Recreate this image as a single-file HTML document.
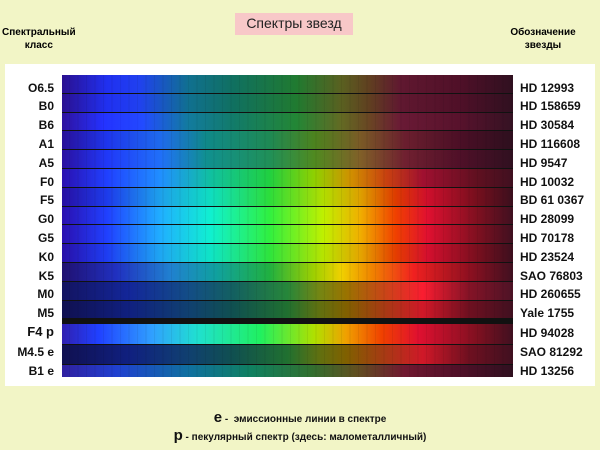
<!DOCTYPE html><html><head><meta charset="utf-8"><style>
body{margin:0;width:600px;height:450px;background:#f2f5c6;font-family:"Liberation Sans",sans-serif;position:relative;overflow:hidden}
.a{position:absolute}
.box{left:5px;top:64px;width:590px;height:322px;background:#fff}
.sp{left:62px;top:75px;width:451px;height:302px;background:#111;}
.r{position:absolute;left:0;width:451px;height:17.8px}
.r::after{content:"";position:absolute;inset:0;background:repeating-linear-gradient(90deg,rgba(0,0,0,0) 0 7px,rgba(0,0,0,.06) 7px 8px,rgba(0,0,0,0) 8px 15px,rgba(0,0,0,.04) 15px 17px);}
.L{left:0;width:54px;text-align:right;font-weight:bold;font-size:12px;color:#111}
.R{left:520px;font-weight:bold;font-size:12px;color:#111}
.hot{background:linear-gradient(90deg,#2a1090 0%,#2030f0 10%,#2040f0 17%,#107090 28%,#107060 38%,#207a30 52%,#5a6020 62%,#604020 68%,#601830 75%,#501028 88%,#301020 100%)}
.A{background:linear-gradient(90deg,#2a10a0 0%,#2038f8 10%,#2070f8 22%,#109090 32%,#209058 46%,#508a20 56%,#806028 66%,#702030 76%,#501028 88%,#301020 100%)}
.F{background:linear-gradient(90deg,#2a10b0 0%,#2040ff 10%,#2090ff 22%,#10c0a0 33%,#20d040 46%,#90d000 56%,#d09000 64%,#c84010 72%,#a01030 80%,#601020 92%,#401020 100%)}
.G{background:linear-gradient(90deg,#2a10b0 0%,#2040ff 10%,#20b0ff 22%,#10f0d0 33%,#30f040 46%,#c0f000 58%,#f0b000 66%,#f04000 74%,#e01030 81%,#801020 92%,#401020 100%)}
.K{background:linear-gradient(90deg,#201070 0%,#2030c0 12%,#2080d0 24%,#10a0a0 34%,#20b040 46%,#a0d000 56%,#f0d000 62%,#f08000 69%,#f02020 78%,#901020 90%,#401020 100%)}
.M{background:linear-gradient(90deg,#101050 0%,#102080 15%,#104070 28%,#105050 38%,#207030 50%,#607010 57%,#806000 63%,#a04010 70%,#d01828 80%,#701020 90%,#401020 100%)}
.FP{background:linear-gradient(90deg,#3020b0 0%,#2040ff 8%,#30a0ff 20%,#20e0d0 30%,#20f060 44%,#b0e000 56%,#f0a000 63%,#f04000 71%,#e01030 79%,#801020 92%,#401020 100%)}
.BE{background:linear-gradient(90deg,#3020a0 0%,#2040d0 12%,#1070a0 28%,#108060 42%,#307030 55%,#605020 65%,#701830 76%,#501028 88%,#301020 100%)}
</style></head><body>
<div class="a" style="left:235px;top:13px;width:118px;height:22px;background:#f8c8c8;font-size:14px;line-height:20px;text-align:center;color:#222">Спектры звезд</div>
<div class="a" style="left:2px;top:26px;font-size:10px;font-weight:bold;text-align:center;line-height:13px">Спектральный<br>класс</div>
<div class="a" style="left:508px;top:26px;font-size:10px;font-weight:bold;text-align:center;line-height:13px;width:70px">Обозначение<br>звезды</div>
<div class="a box"></div>
<div class="a sp">
<div class="r hot" style="top:0"></div>
<div class="r hot" style="top:18.8px"></div>
<div class="r hot" style="top:37.6px;filter:brightness(1.1)"></div>
<div class="r A" style="top:56.4px;filter:brightness(.95)"></div>
<div class="r A" style="top:75.2px"></div>
<div class="r F" style="top:94px"></div>
<div class="r G" style="top:112.8px;filter:brightness(.92)"></div>
<div class="r G" style="top:131.6px"></div>
<div class="r G" style="top:150.4px"></div>
<div class="r G" style="top:169.2px;filter:brightness(.95)"></div>
<div class="r K" style="top:188px"></div>
<div class="r M" style="top:206.8px;filter:brightness(1.2)"></div>
<div class="r M" style="top:225.6px"></div>
<div class="r FP" style="top:249px;height:20px"></div>
<div class="r M" style="top:270px;height:19px"></div>
<div class="r BE" style="top:290px;height:12px"></div>
</div>
<div class="a L" style="top:81px">O6.5</div>
<div class="a L" style="top:99px">B0</div>
<div class="a L" style="top:118px">B6</div>
<div class="a L" style="top:137px">A1</div>
<div class="a L" style="top:156px">A5</div>
<div class="a L" style="top:175px">F0</div>
<div class="a L" style="top:193px">F5</div>
<div class="a L" style="top:212px">G0</div>
<div class="a L" style="top:231px">G5</div>
<div class="a L" style="top:250px">K0</div>
<div class="a L" style="top:269px">K5</div>
<div class="a L" style="top:287px">M0</div>
<div class="a L" style="top:306px">M5</div>
<div class="a L" style="top:324px;font-size:13px">F4 p</div>
<div class="a L" style="top:345px">M4.5 e</div>
<div class="a L" style="top:364px">B1 e</div>
<div class="a R" style="top:81px">HD 12993</div>
<div class="a R" style="top:99px">HD 158659</div>
<div class="a R" style="top:118px">HD 30584</div>
<div class="a R" style="top:137px">HD 116608</div>
<div class="a R" style="top:156px">HD 9547</div>
<div class="a R" style="top:175px">HD 10032</div>
<div class="a R" style="top:193px">BD 61 0367</div>
<div class="a R" style="top:212px">HD 28099</div>
<div class="a R" style="top:231px">HD 70178</div>
<div class="a R" style="top:250px">HD 23524</div>
<div class="a R" style="top:269px">SAO 76803</div>
<div class="a R" style="top:287px">HD 260655</div>
<div class="a R" style="top:306px">Yale 1755</div>
<div class="a R" style="top:326px">HD 94028</div>
<div class="a R" style="top:345px">SAO 81292</div>
<div class="a R" style="top:364px">HD 13256</div>
<div class="a" style="left:0;width:600px;top:409px;text-align:center;font-size:10px;font-weight:bold;color:#111"><span style="font-size:15px">e</span> -&nbsp; эмиссионные линии в спектре</div>
<div class="a" style="left:0;width:600px;top:427px;text-align:center;font-size:10px;font-weight:bold;color:#111"><span style="font-size:15px">p</span> - пекулярный спектр (здесь: малометалличный)</div>
</body></html>
